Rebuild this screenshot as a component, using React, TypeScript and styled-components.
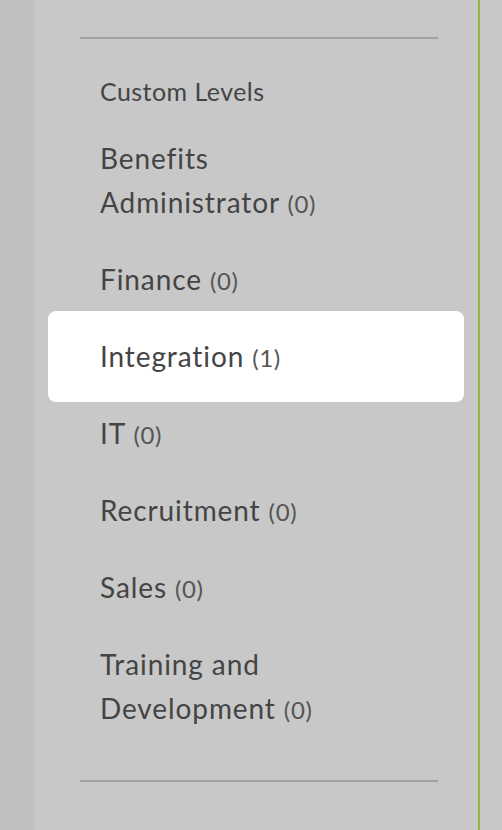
import styled, { createGlobalStyle } from 'styled-components';

interface ILevel {
    name: string;
    count: number;
    active?: boolean;
}

const levels: ILevel[] = [
    { name: 'Benefits Administrator', count: 0 },
    { name: 'Finance', count: 0 },
    { name: 'Integration', count: 1, active: true },
    { name: 'IT', count: 0 },
    { name: 'Recruitment', count: 0 },
    { name: 'Sales', count: 0 },
    { name: 'Training and Development', count: 0 },
];

const GlobalStyle = createGlobalStyle`
    html, body {
        margin: 0;
        padding: 0;
        background: #c8c8c8;
        font-family: Lato, "Open Sans", sans-serif;
    }
`;

const Page = styled.div`
    display: flex;
    width: 502px;
    height: 830px;
    overflow: hidden;
    background: #c8c8c8;
`;

const Strip = styled.div`
    width: 34px;
    flex-shrink: 0;
    background: #c0c0c0;
`;

const Panel = styled.div`
    width: 446px;
    flex-shrink: 0;
    padding: 37px 40px 0 46px;
    box-sizing: border-box;
    border-right: 2px solid #94b83e;
`;

const Rule = styled.hr`
    margin: 0;
    border: none;
    height: 2px;
    background: #a2a2a2;
`;

const Heading = styled.h3`
    margin: 0;
    padding: 36px 0 0 20px;
    font-size: 25px;
    font-weight: 400;
    letter-spacing: 0.45px;
    line-height: 32px;
    color: #454545;
`;

const List = styled.ul`
    list-style: none;
    margin: 0;
    padding: 12px 0 34px;
`;

const Item = styled.li<{ $active?: boolean }>`
    padding: 16.5px 0 16.5px 20px;
    font-size: 28px;
    letter-spacing: 0.9px;
    line-height: 44px;
    color: #444;
    width: 220px;
    border-radius: 8px;

    ${({ $active }) => $active && `
        background: #fff;
        margin: -6px -26px -8px -32px;
        padding: 22.5px 26px 24.5px 52px;
        width: auto;
    `}
`;

const Count = styled.span`
    font-size: 24px;
    line-height: 1;
    letter-spacing: 0.6px;
    color: #555;
`;

const App = () => {
    return (
        <Page>
            <GlobalStyle />
            <Strip />
            <Panel>
                <Rule />
                <Heading>Custom Levels</Heading>
                <List>
                    {levels.map((level) => (
                        <Item key={level.name} $active={level.active}>
                            {level.name} <Count>({level.count})</Count>
                        </Item>
                    ))}
                </List>
                <Rule />
            </Panel>
        </Page>
    );
};

export default App;
